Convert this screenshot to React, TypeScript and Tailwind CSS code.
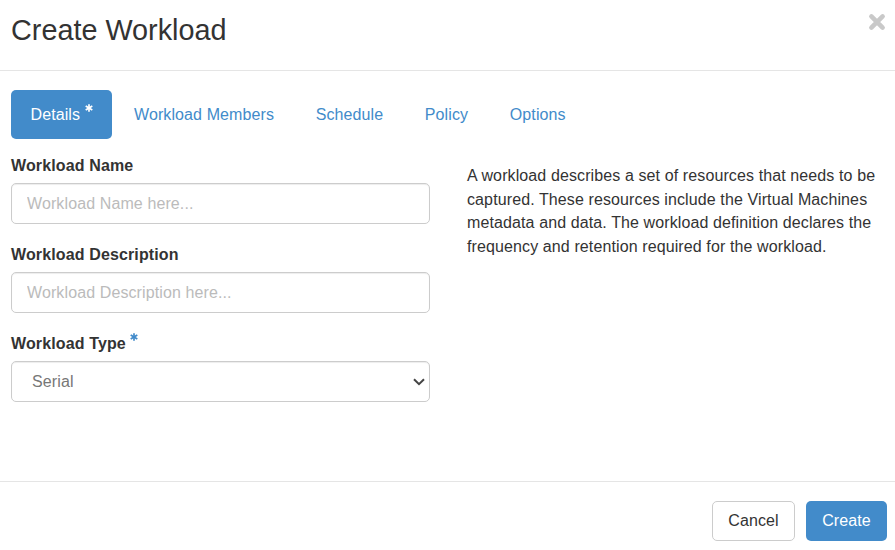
import React from "react";

function Star({ className }: { className: string }) {
  return (
    <svg className={className} width="8" height="8" viewBox="0 0 8 8" aria-hidden="true">
      <g stroke="currentColor" strokeWidth="1.7" strokeLinecap="butt">
        <line x1="4" y1="0.2" x2="4" y2="7.8" />
        <line x1="0.7" y1="2.1" x2="7.3" y2="5.9" />
        <line x1="0.7" y1="5.9" x2="7.3" y2="2.1" />
      </g>
    </svg>
  );
}

function Label({ text, required }: { text: string; required?: boolean }) {
  return (
    <div className="flex items-start h-[27px] text-[16px] leading-[20px] font-bold tracking-[0.13px] text-[#333]">
      <span>{text}</span>
      {required && <Star className="ml-[4px] mt-[-1px] text-[#428bca]" />}
    </div>
  );
}

function TextInput({ placeholder }: { placeholder: string }) {
  return (
    <input
      readOnly
      placeholder={placeholder}
      className="block w-full h-[41px] px-[15px] rounded-[5px] border border-[#ccc] bg-white text-[16px] tracking-[0.11px] text-[#555] placeholder:text-[#bbb] shadow-[inset_0_1px_1px_rgba(0,0,0,0.075)] outline-none"
    />
  );
}

export default function App() {
  return (
    <div className="w-[895px] h-[550px] bg-white text-[#333] font-['Liberation_Sans',Arial,sans-serif] overflow-hidden">
      <header className="h-[71px] border-b border-[#e5e5e5] flex justify-between pl-[11px] pr-[9px]">
        <h1 className="mt-[10px] text-[28.8px] leading-[40px] font-normal text-[#333]">Create Workload</h1>
        <svg className="mt-[13px] text-[#c9c9c9]" width="18" height="18" viewBox="0 0 18 18" aria-hidden="true">
          <path d="M3.4 3.4 L14.6 14.6 M14.6 3.4 L3.4 14.6" stroke="currentColor" strokeWidth="4.6" strokeLinecap="round" />
        </svg>
      </header>

      <main className="h-[410px] px-[11px] pt-[19px]">
        <nav className="flex gap-[2px] text-[16px] leading-[23px] tracking-[0.1px]">
          <a className="flex items-start h-[49px] w-[101px] pl-[19.5px] pt-[13px] rounded-[5px] bg-[#428bca] text-white">
            <span>Details</span>
            <Star className="ml-[5px] mt-[1px] text-white" />
          </a>
          <a className="h-[49px] pl-[20px] pr-[19.7px] pt-[13px] text-[#428bca]">Workload Members</a>
          <a className="h-[49px] pl-[20px] pr-[19.6px] pt-[13px] text-[#428bca]">Schedule</a>
          <a className="h-[49px] pl-[20px] pr-[19.7px] pt-[13px] text-[#428bca]">Policy</a>
          <a className="h-[49px] px-[20px] pt-[13px] text-[#428bca]">Options</a>
        </nav>

        <div className="flex mt-[17px]">
          <form className="w-[419px] shrink-0 flex flex-col gap-[21px]">
            <div>
              <Label text="Workload Name" />
              <TextInput placeholder="Workload Name here..." />
            </div>
            <div>
              <Label text="Workload Description" />
              <TextInput placeholder="Workload Description here..." />
            </div>
            <div>
              <Label text="Workload Type" required />
              <div className="relative">
                <div className="flex items-center h-[41px] pl-[20px] rounded-[5px] border border-[#ccc] bg-white text-[16px] tracking-[0.12px] text-[#777] shadow-[inset_0_1px_1px_rgba(0,0,0,0.075)]">
                  Serial
                </div>
                <svg className="absolute right-[5px] top-[17px] text-[#444]" width="12" height="8" viewBox="0 0 12 8" aria-hidden="true">
                  <path d="M1 1.2 L6 6.2 L11 1.2" fill="none" stroke="currentColor" strokeWidth="2" />
                </svg>
              </div>
            </div>
          </form>
          <p className="ml-[37px] w-[418px] mt-[8px] text-[16px] leading-[23.6px] tracking-[0.11px] text-[#333]">
            A workload describes a set of resources that needs to be captured. These resources include the Virtual Machines metadata and data. The workload definition declares the frequency and retention required for the workload.
          </p>
        </div>
      </main>

      <footer className="h-[69px] border-t border-[#e5e5e5] flex justify-end items-start gap-[11px] pt-[19px] pr-[8px] text-[16px] tracking-[0.1px]">
        <button className="w-[83px] h-[40px] rounded-[5px] border border-[#ccc] bg-white text-[#333]">Cancel</button>
        <button className="w-[81px] h-[40px] rounded-[5px] bg-[#428bca] text-white">Create</button>
      </footer>
    </div>
  );
}
